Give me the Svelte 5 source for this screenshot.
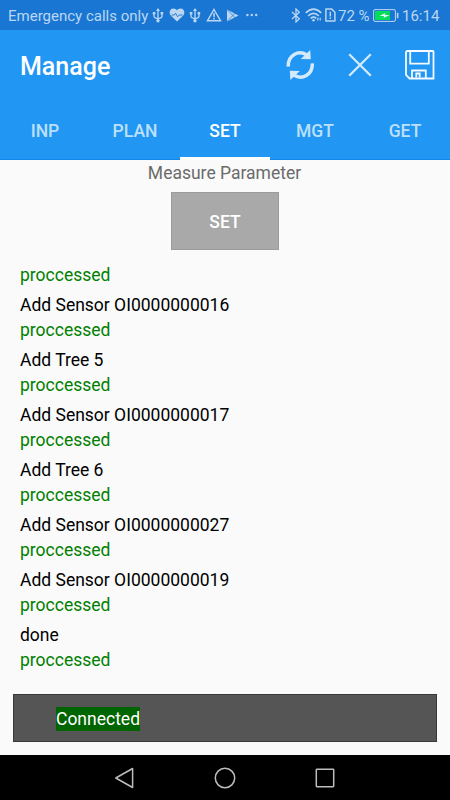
<script lang="ts">
  const tabs = ['INP', 'PLAN', 'SET', 'MGT', 'GET'];
  let active = $state('SET');

  const log = [
    'Add Sensor OI0000000016',
    'Add Tree 5',
    'Add Sensor OI0000000017',
    'Add Tree 6',
    'Add Sensor OI0000000027',
    'Add Sensor OI0000000019',
    'done'
  ];
</script>

{#snippet usb()}
  <svg class="usb" width="12" height="15" viewBox="0 0 12 15" aria-hidden="true">
    <path d="M6 2v11M2 5v3.2q0 1.8 4 2.3M10 5v3.2q0 1.8-4 2.3" fill="none" stroke="currentColor" stroke-width="1.3" />
    <path d="M6 0l2 3H4zM.8 4h2.6v2.6H.8zM8.6 4h2.6v2.6H8.6z" fill="currentColor" />
    <circle cx="6" cy="12.7" r="1.7" fill="currentColor" />
  </svg>
{/snippet}

<div class="screen">
  <div class="status">
    <span class="carrier">Emergency calls only</span>
    <div class="notices">
      {@render usb()}
      <svg class="heart" width="16" height="14" viewBox="0 0 16 14" aria-hidden="true">
        <path d="M8 13.5L2 7.8C-.6 5 .8.6 4.4.6 6 .6 7.2 1.3 8 2.5 8.8 1.3 10 .6 11.6.6c3.6 0 5 4.4 2.4 7.2z" fill="currentColor" />
        <path d="M2.5 7h2.8l1.3-1.8 2 3.6L10.2 7h3.3" fill="none" stroke="#1976d2" stroke-width=".9" />
      </svg>
      {@render usb()}
      <svg class="warn" width="16" height="14" viewBox="0 0 16 14" fill="none" stroke="currentColor" aria-hidden="true">
        <path d="M8 1.5L14.6 12.8H1.4z" stroke-width="1.4" />
        <path d="M8 5v4.2M8 10v1.5" stroke-width="1.5" />
      </svg>
      <svg class="play" width="13" height="13" viewBox="0 0 13 13" aria-hidden="true">
        <path d="M1 .5v12L12.5 6.5z" fill="currentColor" />
        <path d="M1.5 1l7.8 8M1.5 12l7.8-8" fill="none" stroke="#1976d2" stroke-width=".7" />
      </svg>
      <svg width="12" height="4" viewBox="0 0 12 4" fill="currentColor" aria-hidden="true">
        <circle cx="1.4" cy="2" r="1.2" /><circle cx="5.8" cy="2" r="1.2" /><circle cx="10.2" cy="2" r="1.2" />
      </svg>
    </div>
    <div class="system">
      <svg class="bluetooth" width="10" height="15" viewBox="0 0 10 15" fill="none" stroke="currentColor" stroke-width="1.3" aria-hidden="true">
        <path d="M1 4l7.3 6.8L5 14V1l3.3 3.2L1 11" />
      </svg>
      <svg class="wifi" width="17" height="14" viewBox="0 0 17 14" fill="none" stroke="currentColor" stroke-width="1.6" aria-hidden="true">
        <path d="M.7 5q7.8-7.6 15.6 0M3.2 7.8q5.3-5 10.6 0M5.7 10.4q2.8-2.5 5.6 0" />
        <circle cx="8.5" cy="12.3" r="1.2" fill="currentColor" stroke="none" />
        <path d="M12.8 9.7v3.4M15.2 9.7v3.4" stroke-width="1.2" stroke-dasharray="2.2 .7" />
      </svg>
      <svg class="sim" width="11" height="14" viewBox="0 0 11 14" fill="none" stroke="currentColor" aria-hidden="true">
        <path d="M.9 1.1h5.8l3.2 3.1v8.7H.9z" stroke-width="1.5" stroke-linejoin="round" />
        <path d="M5.3 3.7v4.7M5.3 9.5v1.6" stroke-width="1.5" />
      </svg>
      <span class="percent">72 %</span>
      <svg class="battery" width="26" height="13" viewBox="0 0 26 13" aria-hidden="true">
        <rect x=".6" y=".6" width="21.8" height="11.8" rx="1.4" fill="none" stroke="currentColor" />
        <path d="M2 2h15v9H2z" fill="#00df57" />
        <path d="M24.6 3.8v5.4" stroke="currentColor" stroke-width="1.6" />
        <path d="M6.5 7l5.7-3-.2 2h4.5l-5.8 3 .2-2z" fill="#e8f4ff" />
      </svg>
      <span class="clock">16:14</span>
    </div>
  </div>

  <header>
    <div class="toolbar">
      <h1>Manage</h1>
      <div class="actions">
        <button aria-label="Refresh">
          <svg width="30" height="32" viewBox="0 0 30 32" aria-hidden="true">
            <g fill="none" stroke="#d3eafd" stroke-width="3.5">
              <path d="M3.3 17.6C2.8 6 13.5.8 21.8 6" />
              <path d="M27.3 14.4C27.8 26 17.1 31.2 8.8 26" />
            </g>
            <path d="M25.2 1l.6 9.2-10-.3zM5.4 31l-.6-9.2 10 .3z" fill="#d3eafd" />
          </svg>
        </button>
        <button aria-label="Close">
          <svg width="24" height="24" viewBox="0 0 24 24" fill="none" stroke="#d3eafd" stroke-width="2.3" aria-hidden="true">
            <path d="M1.2 1.2l21.6 21.6M22.8 1.2L1.2 22.8" />
          </svg>
        </button>
        <button aria-label="Save">
          <svg width="30" height="30" viewBox="0 0 30 30" fill="none" stroke="#f4faff" stroke-width="1.8" aria-hidden="true">
            <path d="M2 1h26l.5.5V28.5H4.5L1 25V2z" />
            <path d="M5.2 1v12.6h18.6V1" />
            <path d="M7 28.5v-8h13.8v8M11.3 27.5v-4h3.4v4" />
          </svg>
        </button>
      </div>
    </div>
    <nav>
      {#each tabs as tab}
        <button class="tab" class:active={tab === active} onclick={() => (active = tab)}>{tab}</button>
      {/each}
    </nav>
  </header>

  <main>
    <p class="caption">Measure Parameter</p>
    <button class="set">SET</button>
    <div class="log">
      <p class="result">proccessed</p>
      {#each log as entry}
        <p class="entry">{entry}</p>
        <p class="result">proccessed</p>
      {/each}
    </div>
    <div class="connection"><span>Connected</span></div>
  </main>

  <div class="navbar">
    <svg width="22" height="22" viewBox="0 0 22 22" aria-hidden="true"><path d="M18.6 1.5v19L1.8 11z" /></svg>
    <svg width="22" height="22" viewBox="0 0 22 22" aria-hidden="true"><circle cx="11" cy="11" r="9.7" /></svg>
    <svg width="22" height="22" viewBox="0 0 22 22" aria-hidden="true"><rect x="2.3" y="2.3" width="17.4" height="17.4" rx=".6" /></svg>
  </div>
</div>

<style>
  :global(body) {
    margin: 0;
  }

  .screen {
    display: flex;
    flex-direction: column;
    width: 450px;
    height: 800px;
    overflow: hidden;
    background: #fafafa;
    font-family: Roboto, sans-serif;
  }

  p,
  h1 {
    margin: 0;
  }

  svg {
    display: block;
    flex: none;
  }

  button {
    padding: 0;
    border: 0;
    background: none;
    font: inherit;
    color: inherit;
  }

  .status {
    display: flex;
    align-items: center;
    box-sizing: border-box;
    height: 30px;
    padding: 0 11px 0 8px;
    background: #1976d2;
    color: #bad6f2;
    font-size: 15px;
    white-space: nowrap;
  }

  .status span {
    padding-top: 2px;
    line-height: 28px;
  }

  .carrier {
    width: 144px;
  }

  .notices,
  .system {
    display: flex;
    align-items: center;
  }

  .usb {
    margin-right: 5px;
  }

  .heart {
    margin-right: 4px;
  }

  .warn {
    margin-right: 4px;
  }

  .play {
    margin-right: 7px;
  }

  .system {
    margin-left: auto;
  }

  .bluetooth {
    margin-right: 4px;
  }

  .wifi {
    margin-right: 3px;
  }

  .sim {
    margin-right: 2px;
  }

  .percent {
    width: 35px;
  }

  .battery {
    margin-right: 3px;
  }

  .clock {
    width: 37px;
  }

  header {
    height: 129px;
    border-bottom: 1px solid #1384e8;
    background: #2196f3;
    color: #fff;
  }

  .toolbar {
    display: flex;
    align-items: center;
    justify-content: space-between;
    height: 70px;
    padding: 0 15px 0 20px;
  }

  h1 {
    padding-top: 3px;
    font-size: 25px;
    font-weight: 500;
    line-height: 30px;
  }

  .actions {
    display: flex;
    align-items: center;
    gap: 33px;
  }

  nav {
    display: grid;
    grid-template-columns: repeat(5, 1fr);
    height: 60px;
  }

  .tab {
    box-sizing: border-box;
    height: 60px;
    padding-top: 2px;
    border-top: 3px solid transparent;
    border-bottom: 3px solid transparent;
    color: #bce0fb;
    font-size: 17.5px;
    font-weight: 500;
  }

  .tab.active {
    border-bottom-color: #fff;
    color: #fff;
  }

  main {
    display: flex;
    flex: 1;
    flex-direction: column;
    align-items: center;
  }

  .caption {
    height: 32px;
    padding-right: 1px;
    color: #6b6b6b;
    font-size: 17.5px;
    line-height: 27px;
  }

  .set {
    box-sizing: border-box;
    width: 108px;
    height: 58px;
    padding-top: 2px;
    border: 1px solid #9c9c9c;
    background: #a9a9a9;
    color: #fff;
    font-size: 17.5px;
    font-weight: 500;
  }

  .log {
    align-self: stretch;
    padding: 12px 20px 0;
    font-size: 17.5px;
  }

  .result {
    height: 30px;
    color: #008000;
    line-height: 26px;
  }

  .entry {
    height: 25px;
    color: #000;
    line-height: 27px;
  }

  .connection {
    display: flex;
    align-items: center;
    align-self: stretch;
    box-sizing: border-box;
    height: 48px;
    margin: auto 13px 13px;
    padding: 1px 0 0 42px;
    border: 1px solid #383838;
    background: #555;
    color: #fff;
    font-size: 17.5px;
    line-height: 24px;
  }

  .connection span {
    background: #006400;
  }

  .navbar {
    display: flex;
    align-items: center;
    justify-content: center;
    gap: 78px;
    height: 45px;
    background: #000;
  }

  .navbar svg {
    fill: none;
    stroke: #bdbdbd;
    stroke-width: 1.5;
    stroke-linejoin: round;
  }
</style>
